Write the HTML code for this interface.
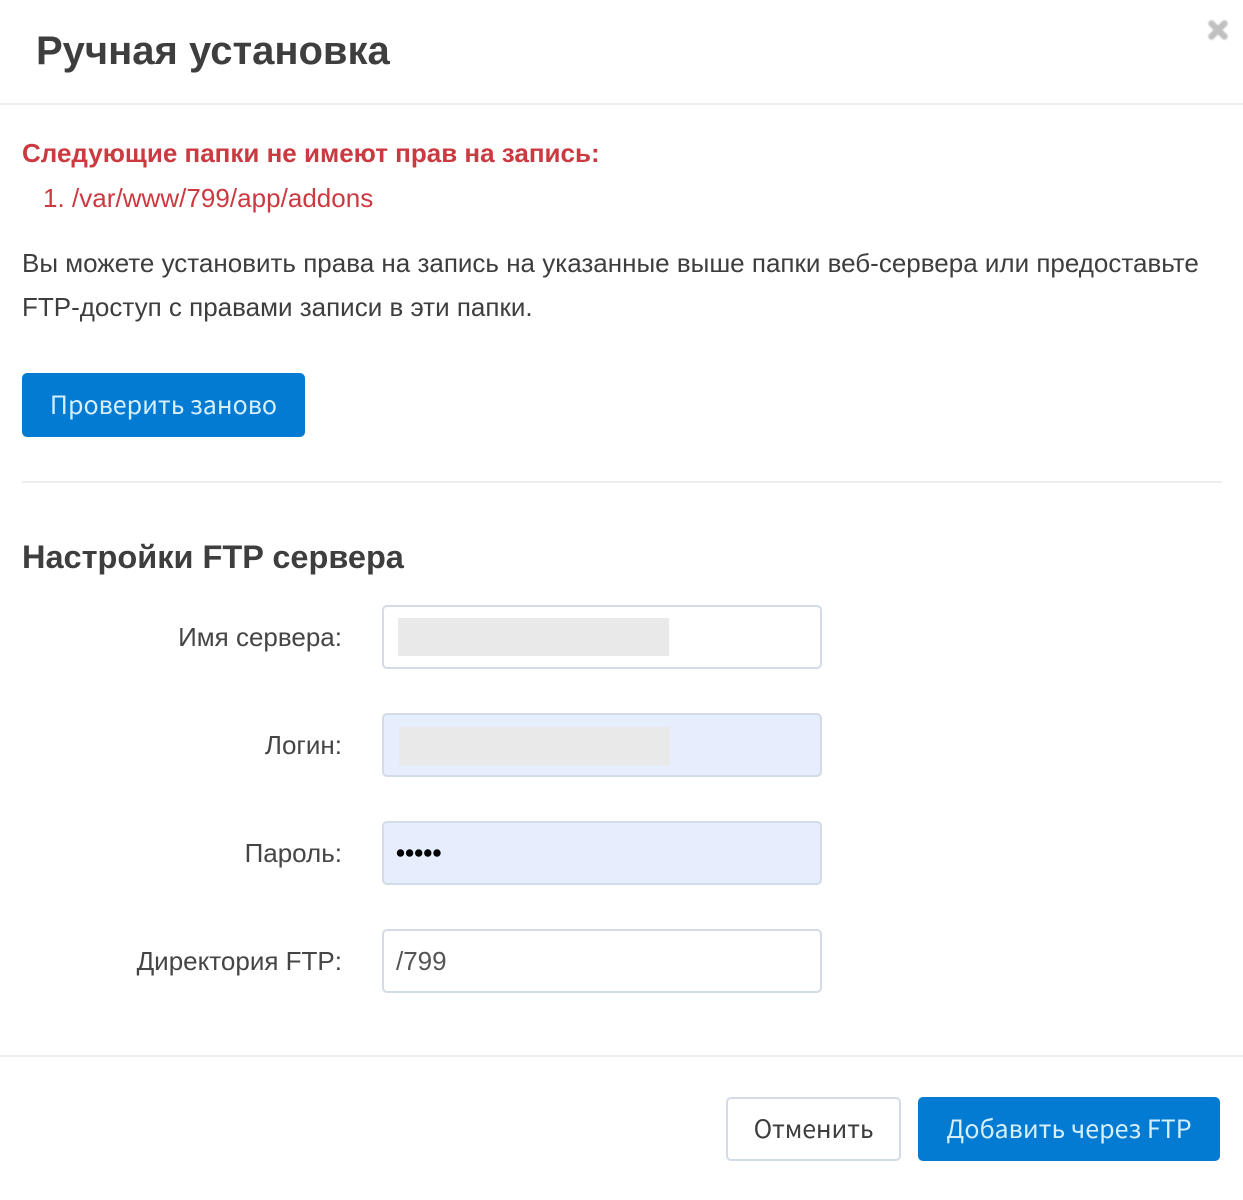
<!DOCTYPE html>
<html lang="ru"><head><meta charset="utf-8"><title>Ручная установка</title>
<style>
html,body{margin:0;padding:0;background:#fff;width:1243px;height:1200px;overflow:hidden}
body{position:relative;font-family:"Liberation Sans",sans-serif;color:#3e3e3e}
.t{position:absolute;white-space:nowrap}
.hr{position:absolute;height:2px;background:#eeeeee}
.in{position:absolute;left:382px;width:436px;height:60px;border:2px solid #d2dbe6;border-radius:5px;background:#fff}
.in.b{background:#e6edfc}
.g{position:absolute;background:#e9e9e9;height:38px;width:271px}
.btn{position:absolute;border-radius:5px;background:#037bd2;color:#d5effc;text-align:center;height:64px;line-height:63px;font-family:"Noto Sans CJK JP",sans-serif;font-size:25px;white-space:nowrap}
.l{right:901px;font-size:26px;line-height:30px;color:#454545}
</style></head><body>
<div class="t" style="left:36px;top:28px;font-size:40px;line-height:46px;font-weight:700">Ручная установка</div>
<svg style="position:absolute;left:1207px;top:19px;filter:blur(.7px)" width="22" height="22" viewBox="0 0 22 22"><path d="M4.500 4.500 17.500 17.500M17.500 4.500 4.500 17.500" stroke="#c0c0c0" stroke-width="6.500" stroke-linecap="round"/></svg>
<div class="hr" style="left:0;top:103px;width:1243px"></div>
<div class="t" style="left:22px;top:138px;font-size:26px;line-height:30px;font-weight:700;color:#cb3a40">Следующие папки не имеют прав на запись:</div>
<div class="t" style="left:43px;top:183px;font-size:26px;line-height:30px;color:#cb3a40;letter-spacing:.03px">1. /var/www/799/app/addons</div>
<div class="t" style="left:22px;top:248px;font-size:26px;line-height:30px">Вы можете установить права на запись на указанные выше папки веб-сервера или предоставьте</div>
<div class="t" style="left:22px;top:292px;font-size:26px;line-height:30px">FTP-доступ с правами записи в эти папки.</div>
<div class="btn" style="left:22px;top:373px;width:283px">Проверить заново</div>
<div class="hr" style="left:22px;top:481px;width:1200px"></div>
<div class="t" style="left:22px;top:538px;font-size:32.500px;line-height:38px;font-weight:700">Настройки FTP сервера</div>
<div class="t l" style="top:622px">Имя сервера:</div>
<div class="in" style="top:605px"></div><div class="g" style="left:398px;top:618px"></div>
<div class="t l" style="top:730px">Логин:</div>
<div class="in b" style="top:713px"></div><div class="g" style="left:399px;top:727px"></div>
<div class="t l" style="top:838px">Пароль:</div>
<div class="in b" style="top:821px"></div>
<svg style="position:absolute;left:396px;top:847px" width="47" height="12" fill="#000"><circle cx="4.500" cy="6" r="3.700"/><circle cx="13.600" cy="6" r="3.700"/><circle cx="22.700" cy="6" r="3.700"/><circle cx="31.800" cy="6" r="3.700"/><circle cx="41" cy="6" r="3.700"/></svg>
<div class="t l" style="top:946px">Директория FTP:</div>
<div class="in" style="top:929px"></div>
<div class="t" style="left:396px;top:946px;font-size:26px;line-height:30px;color:#555">/799</div>
<div class="hr" style="left:0;top:1055px;width:1243px"></div>
<div class="btn" style="left:726px;top:1097px;width:171px;height:60px;line-height:59px;background:#fff;border:2px solid #d2dbe6;color:#3e3e3e;letter-spacing:-.15px">Отменить</div>
<div class="btn" style="left:918px;top:1097px;width:302px;letter-spacing:.03px">Добавить через FTP</div>
</body></html>
